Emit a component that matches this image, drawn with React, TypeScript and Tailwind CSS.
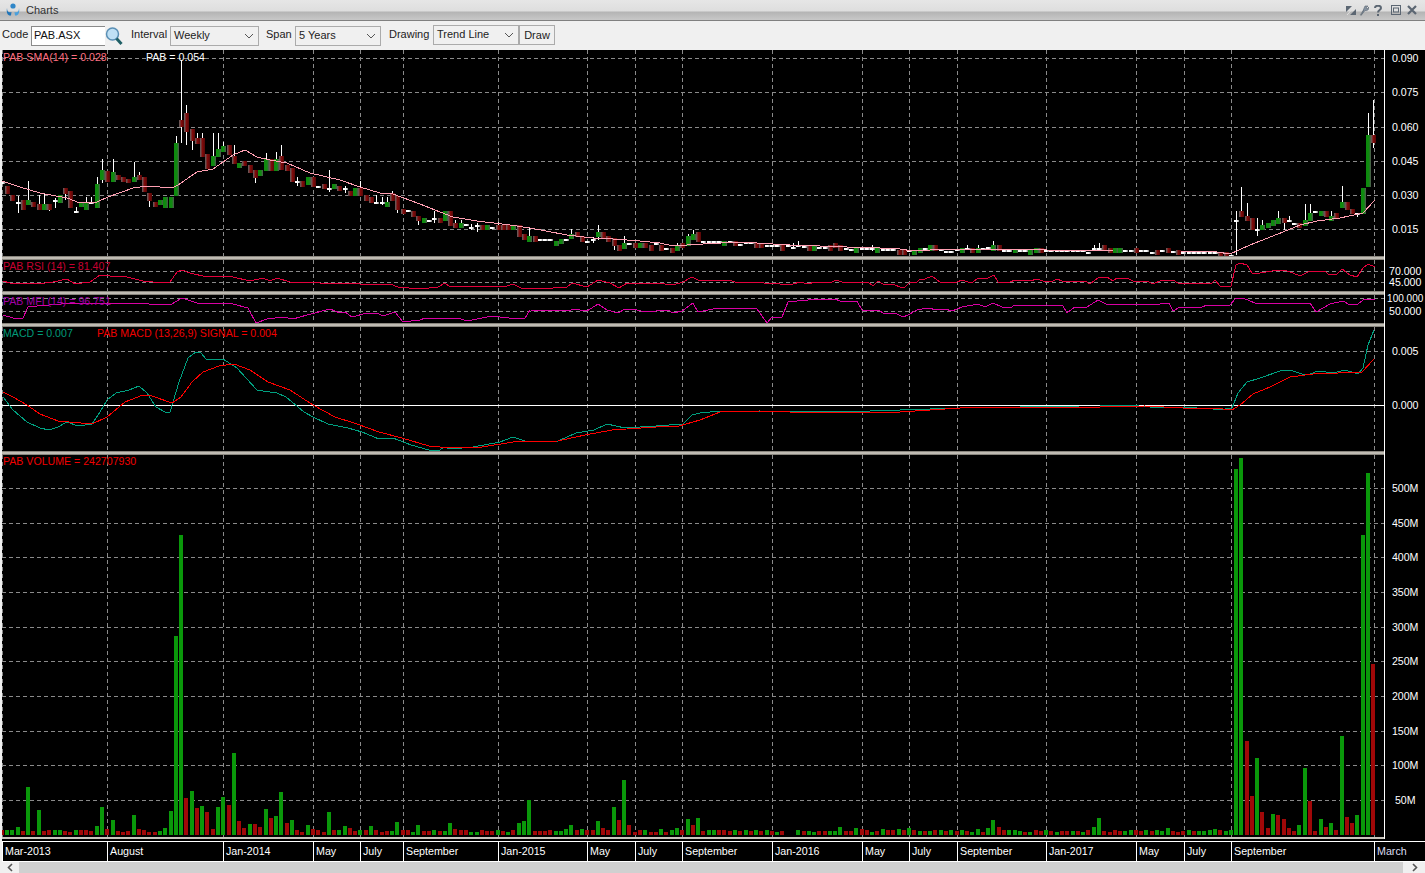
import React from "react";

const VOL = [-5,5,5,8,-4,48,-4,25,-4,-5,5,5,-4,-3,5,-5,-5,-4,9,28,-6,15,-4,-3,-4,20,-6,-5,-3,-3,4,7,24,199,300,-37,44,-27,29,-23,-6,28,38,-30,82,-14,-7,11,-11,-8,26,-17,19,43,-12,15,-5,-3,10,-6,-5,-3,23,-5,5,9,-7,-4,5,-5,9,-5,-3,-4,4,13,-5,-5,3,10,
-4,-4,5,-4,4,12,-6,-5,-5,3,3,-5,-4,-4,5,-4,3,-5,12,14,35,-4,-4,-4,-5,4,4,6,10,-5,6,-5,-5,14,-7,-5,28,-15,55,-10,-3,-5,5,-3,-3,6,-3,5,7,-5,16,-10,17,-4,5,5,-5,-5,-4,5,-4,5,-4,5,-4,5,-4,3,-4,0,0,5,-4,4,3,-4,-4,4,4,
8,-4,-4,7,-6,-5,3,-4,6,-5,-5,6,-5,7,-5,4,-4,4,-5,5,-4,5,-4,5,-4,3,6,-3,7,15,-8,-5,5,5,4,-3,3,-5,-4,5,-4,3,-4,-4,4,-4,3,-5,8,17,-4,-3,-5,-4,4,5,-5,-4,5,-4,5,4,7,-4,-3,-4,5,-4,4,4,5,6,-5,4,5,
366,377,-94,-39,77,-23,-7,21,-20,-16,-7,-4,10,67,-34,-4,16,-8,12,-5,99,-18,-12,20,300,362,-171];

const CANDLES = "d182 r186,194 r195,201 d202,196,213 r200,210 g200,205,181 r202,207 r204,210,195 g204,210,194 r204,210,,211 d200,198,208 g195,203 r188,194,,200 r191,208 d211,207,213 g202,207 g203,210,197 d202,197 g184,208,177 g170,180,159,183 r171,182 g172,182,159 r175,180 r177,182 r179,183 g177,182,162 r175,180,172 r177,192 r193,201,,207 r202,207 g200,205 g197,208 g197,208 g143,196,136 r120,127,60,143 r113,132,105,145 r129,141,,150 r138,144,133 r138,157,133 r154,169 g156,166,133 g149,157,133 g146,152,142 r145,155 r156,164,145 g163,168 r161,166 r165,173 r170,178,,183 g170,176 g159,171,153 r159,171 g159,171,152 r156,170,145 r165,171 r168,182 d181,177,186 r181,187 g177,185 r177,187 d186 r184,189 d188,170,192 g184,189 r186,191 d188,186,193 r191,196 g188,196 r188,196,181 r195,201 r197,203 d202,195 d202,197,205 g202,207,197 r193,201,191 r196,210,,213 r209,214 d210 r211,217 r216,221,,225 g218,223 d220 d218,211,223 r218,223 g211,221 r211,226 r223,228,220 g223,228,220 d224 d227,224,230 d225,223,232 r225,230 g225,230 d227 r225,230,222 r225,230 r225,230 g225,230 r225,237 r234,240 g236,242,227 r236,242 d239 d239 d239 g241,246 g239,244 d239 g234,239,229 r232,237 r236,242 d241 d239,237,243 g232,237,225,240 r232,238 r236,242 r238,246,,250 r245,251 g243,249,236 d243 r243,248 g243,248 r243,248 r245,251 d243 r245,251 d248 r248,253 g245,251,243 r243,248 g236,246,234 g234,240,230 r232,242 d241 d241 d241 d241 g241,246 d241 r241,246 d244 d242 d242 r243,248 r243,248 d245 d245 d245 r245,251 d245 d247,243 d245,241 d246 r245,251 g245,251 d247 d247 r245,251 r243,248 r245,251 d248 d249 g248,253 d248 d248 d248,245,251 g248,253 d249 d249 d249 r250,255 r250,255 d250 g250,255 g248,253 d248 g245,251 r245,251 d249 d251 d251 d249 g248,253 d248,245 r248,253 g248,253,245 d248 d247 g245,251,241 r245,251 d250 d250 g249,253 d250 d250 g250,255 g248,253 r248,253 d250 d250 d250 d250 d250 d250 d250 d250 d252 d248,245 d248,243 r245,251 r248,253 g248,253 g248,253 d250 d250 r248,253 d250 d250 d252 r250,255 d250 r248,253 d251 r250,255 d252 d252 d252 d252 d252 d252 d252 r252,258 r252,258 d255 d220,211,255 r211,217,187 r216,221,203 r218,230 d229,218,236 g225,230,220 g223,228 g220,226 g218,224,211 r218,223,,230 d220,216 d223 r223,228 g220,226,204 g213,221,204 d211 g211,216 r211,217 g216,221,211 r213,219 g202,208,186 r202,210 r209,214 d213,,217 g188,214 g135,187,113 r135,143,100,148".split(" ");

const SMA = [2,181,20,187,40,193,67,198,80,203,97,202,108,197,133,188,147,186,172,188,178,185,197,172,213,169,233,155,245,150,257,157,270,160,287,163,310,173,340,180,360,187,380,193,393,194,420,204,440,212,453,217,477,221,510,225,530,228,567,235,593,238,613,239,640,241,660,243,673,246,687,245,703,244,740,242,773,244,790,245,820,246,847,247,880,248,900,249,913,251,947,249,993,249,1047,250,1113,251,1180,251,1217,252,1230,254,1250,245,1283,232,1300,225,1317,221,1340,218,1363,213,1375,200];

const RSI = [3,281,10,283,20,283,37,284,53,282,67,279,75,284,90,282,100,275,110,276,127,277,143,281,163,283,170,282,177,272,182,270,190,273,207,277,220,276,233,277,250,281,263,278,270,281,277,278,290,282,310,282,320,283,340,283,357,283,363,285,390,284,398,287,420,289,438,287,445,283,450,287,467,286,507,286,513,284,523,289,553,288,567,287,572,283,587,287,598,280,610,283,619,288,627,283,650,284,657,283,673,285,683,282,692,277,698,280,730,280,737,283,747,282,780,284,793,284,800,282,808,284,815,282,830,283,836,280,842,282,868,282,873,286,878,281,883,284,895,285,900,287,905,287,910,282,917,282,920,279,925,279,932,276,940,282,957,282,962,280,968,282,973,282,978,278,988,278,994,275,998,282,1010,282,1015,280,1030,281,1037,279,1043,281,1053,281,1057,279,1062,281,1085,281,1090,284,1098,278,1107,277,1113,281,1117,278,1127,278,1133,281,1147,281,1153,284,1162,280,1173,280,1178,283,1212,283,1215,280,1220,286,1231,286,1236,265,1240,263,1247,265,1252,273,1260,273,1272,271,1282,270,1287,271,1293,273,1300,276,1310,271,1325,271,1328,274,1337,274,1342,269,1350,275,1357,277,1363,268,1368,264,1375,267];

const MFI = [3,315,13,318,23,318,28,307,37,306,73,303,93,303,127,303,170,305,182,298,197,303,233,304,248,308,256,323,267,319,283,317,293,319,307,315,330,309,340,313,345,312,352,317,367,313,377,313,383,316,395,312,403,322,420,320,425,318,447,319,458,318,467,321,492,316,517,319,525,318,530,310,570,311,572,309,587,311,598,304,607,310,618,313,625,309,637,310,645,312,668,310,673,313,682,311,693,303,698,312,718,308,732,308,757,309,767,323,772,317,782,317,788,302,797,301,808,300,822,299,835,299,840,301,857,301,862,310,880,311,883,313,895,313,903,317,908,315,917,310,928,308,937,310,945,309,952,311,962,307,978,304,985,307,993,303,1002,307,1012,307,1013,306,1047,305,1063,306,1067,313,1075,307,1087,307,1098,300,1108,305,1133,304,1160,304,1169,303,1173,311,1180,307,1202,307,1207,305,1230,305,1236,298,1243,298,1255,303,1310,303,1316,312,1330,304,1343,301,1350,305,1358,304,1363,300,1375,299];

const MACD_G = [3,397,13,410,27,422,40,428,49,430,58,427,67,422,78,426,92,424,100,412,107,400,116,393,129,390,139,386,147,393,156,407,165,412,170,412,179,382,188,358,196,352,201,353,206,359,223,359,237,368,257,390,263,391,277,393,286,397,304,412,313,417,328,424,348,428,362,432,379,439,393,438,411,445,429,450,440,450,444,447,451,449,473,447,500,442,513,437,525,441,558,441,576,433,594,430,607,424,625,428,656,426,683,424,692,415,700,413,720,411,770,411,870,411,960,408,1080,406,1100,406,1127,405,1150,407,1172,407,1197,408,1213,409,1225,409,1232,408,1238,393,1247,382,1260,378,1283,370,1290,370,1302,374,1310,374,1318,371,1333,373,1345,370,1358,374,1363,368,1368,345,1374,330];

const MACD_R = [3,392,13,397,27,405,40,414,58,421,92,424,107,417,125,402,143,395,152,396,172,403,181,397,192,382,203,372,219,366,234,364,250,370,268,382,290,390,313,405,335,417,357,424,379,432,402,438,429,446,451,448,482,447,513,442,558,441,585,435,612,430,656,427,679,426,700,420,720,412,760,411,790,412,900,412,960,408,1100,407,1145,406,1183,408,1197,408,1223,409,1232,410,1240,405,1253,394,1270,387,1290,377,1313,374,1338,373,1362,372,1374,359];

const GRID_X = [2,107,223,313,360,403,498,587,635,682,772,862,909,957,1046,1136,1184,1231,1374];
const pts = (a: number[]) => a.reduce((s, v, i) => s + (i % 2 ? "," : " ") + v, "").trim();
const bx = (i: number) => Math.round(1.75 + 5.275 * i);

function Chart({ top, h, grid, children }: { top: number; h: number; grid: number[]; children?: React.ReactNode }) {
  return (
    <svg width={1382} height={h} viewBox={`2 ${top} 1382 ${h}`} className="block shrink-0">
      <g stroke="#8a8a8a" strokeWidth={1} strokeDasharray="4 3" shapeRendering="crispEdges">
        {GRID_X.map((x) => <line key={x} x1={x + 0.5} x2={x + 0.5} y1={top} y2={top + h} />)}
        {grid.map((y) => <line key={y} x1={2} x2={1384} y1={y + 0.5} y2={y + 0.5} />)}
      </g>
      {children}
    </svg>
  );
}

function Panel({ top, h, grid, labels, legend, children }: { top: number; h: number; grid: number[]; labels: [string, number][]; legend?: React.ReactNode; children?: React.ReactNode }) {
  return (
    <div className="flex shrink-0" style={{ height: h }}>
      <div className="relative w-[1382px] shrink-0 overflow-hidden">
        <Chart top={top} h={h} grid={grid}>{children}</Chart>
        {legend}
      </div>
      <div className="flex-1 border-l border-white">
        <svg width={40} height={h} viewBox={`1385 ${top} 40 ${h}`} className="relative z-10 block overflow-visible">
          {labels.map(([t, y]) => (
            <text key={t} x={1405.2} y={y + 4} textAnchor="middle" fontSize={t.length > 6 ? 10 : 10.6} fill="#ffffff">{t}</text>
          ))}
        </svg>
      </div>
    </div>
  );
}

function Sep() {
  return (
    <div className="flex h-[4px] shrink-0">
      <div className="w-[1382px] shrink-0 bg-gradient-to-b from-[#6f6c64] via-[#dcd8d0] to-[#6f6c64]" />
      <div className="flex-1 border-l border-white" />
    </div>
  );
}

function Candles() {
  return (
    <g shapeRendering="crispEdges">
      {CANDLES.map((c, i) => {
        const t = c[0];
        const [a, b, hi, lo] = c.slice(1).split(",").map((v) => (v === "" ? NaN : Number(v)));
        const x = bx(i);
        if (t === "d") {
          return (
            <g key={i}>
              {(b > 0 || hi > 0) && <rect x={x} y={b || a} width={1} height={Math.max((hi || a + 1) - (b || a), 1)} fill="#fff" />}
              <rect x={x - 2} y={a} width={5} height={2} fill="url(#dj)" />
            </g>
          );
        }
        return (
          <g key={i}>
            {hi > 0 && <rect x={x} y={hi} width={1} height={a - hi} fill="#fff" />}
            {lo > 0 && <rect x={x} y={b} width={1} height={lo - b} fill="#fff" />}
            <rect x={x - 2} y={a} width={5} height={b - a} fill={t === "g" ? "url(#up)" : "url(#dn)"} />
          </g>
        );
      })}
    </g>
  );
}

function Chevron() {
  return (
    <svg width="10" height="6" viewBox="0 0 10 6" className="shrink-0">
      <path d="M1 1 L5 5 L9 1" fill="none" stroke="#555" strokeWidth="1" />
    </svg>
  );
}

function Select({ label, w, cls }: { label: string; w: string; cls?: string }) {
  return (
    <div className={`flex h-[20px] items-center justify-between border border-[#ababab] bg-[#f0f0f0] pl-[3px] pr-[4px] text-[#222] ${w} ${cls ?? ""}`}>
      <span>{label}</span>
      <Chevron />
    </div>
  );
}

const DATES: [string, number][] = [["Mar-2013",105],["August",116],["Jan-2014",90],["May",47],["July",43],["September",95],["Jan-2015",89],["May",48],["July",47],["September",90],["Jan-2016",90],["May",47],["July",48],["September",89],["Jan-2017",90],["May",48],["July",47],["September",143]];

export default function App() {
  return (
    <div className="flex h-[873px] w-[1425px] flex-col overflow-hidden bg-[#f0f0f0] [font-family:'Liberation_Sans',Arial,sans-serif]">
      {/* Title bar */}
      <div className="flex h-[21px] shrink-0 items-center justify-between border-b border-[#808080] bg-[linear-gradient(#e6e6e6_0%,#dedede_55%,#b4b4b4_60%,#c8c8c8_100%)] pl-[6px] pr-[8px]">
        <div className="flex items-center gap-[6px]">
          <svg width="14" height="14" viewBox="0 0 14 14">
            <circle cx="7" cy="3" r="2.6" fill="#2f86c8" />
            <path d="M1 5 C1 9 3 10 5.5 9 L5 12.5 C2 13 0 10 1 5 Z" fill="#1f74b8" />
            <path d="M13 5 C13 9 11 10 8.5 9 L9 12.5 C12 13 14 10 13 5 Z" fill="#4aa0dc" />
          </svg>
          <span className="mt-[1px] text-[11px] text-[#333]">Charts</span>
        </div>
        <div className="flex items-center gap-[5px]">
          <svg width="10" height="11" viewBox="0 0 10 11" className="-mr-[2px]">
            <path d="M0 1 H6 L0 7 Z M10 10 H4 L10 4 Z" fill="#5b6672" />
            <path d="M1 10 L9 1" stroke="#e0e0e0" strokeWidth="1" />
          </svg>
          <svg width="10" height="11" viewBox="0 0 10 11">
            <path d="M1 10 L5 5 M6 1 L9 1 L7 3 L8 4 L10 2 C10 5 8 6 6 5.5 L2 10.5 Z" fill="#8592a0" stroke="#5b6672" strokeWidth="0.6" />
          </svg>
          <svg width="8" height="11" viewBox="1 0 8 11">
            <path d="M2 3 C2 0 8 0 8 3 C8 5 5 5 5 7.5" fill="none" stroke="#5b6672" strokeWidth="2" />
            <rect x="4" y="9" width="2" height="2" fill="#5b6672" />
          </svg>
          <svg width="10" height="10" viewBox="0 0 10 10" className="ml-[4px]">
            <rect x="0.5" y="0.5" width="9" height="9" fill="none" stroke="#5b6672" />
            <rect x="2.5" y="3" width="5" height="4" fill="none" stroke="#5b6672" />
          </svg>
          <svg width="10" height="10" viewBox="0 0 10 10" className="ml-[1px]">
            <path d="M1 1 L9 9 M9 1 L1 9" stroke="#5b6672" strokeWidth="2.2" />
          </svg>
        </div>
      </div>

      {/* Toolbar */}
      <div className="flex h-[29px] shrink-0 items-center bg-[#f0f0f0] pl-[2px] text-[11px] text-[#222]">
        <span className="mb-[2px] w-[29px]">Code</span>
        <div className="flex h-[20px] w-[74px] items-center border border-[#8a8a8a] border-r-0 bg-white pl-[2px] text-[#111]">PAB.ASX</div>
        <svg width="18" height="20" viewBox="0 0 18 20">
          <circle cx="7.5" cy="8" r="6" fill="#bfe0f5" stroke="#5a8fb5" strokeWidth="1.5" />
          <path d="M11.5 12.5 L16.5 18" stroke="#1f5f66" strokeWidth="3" />
        </svg>
        <span className="mb-[2px] ml-[8px] w-[39px]">Interval</span>
        <Select label="Weekly" w="w-[89px]" />
        <span className="mb-[2px] ml-[7px] w-[29px]">Span</span>
        <Select label="5 Years" w="w-[86px]" />
        <span className="mb-[2px] ml-[8px] w-[44px]">Drawing</span>
        <Select label="Trend Line" w="w-[86px]" cls="mb-[2px]" />
        <div className="mb-[1px] flex h-[20px] w-[36px] items-center justify-center border border-[#ababab] bg-[#f0f0f0]">Draw</div>
      </div>

      {/* Chart area */}
      <div className="ml-[2px] flex flex-1 flex-col bg-black">
        <Panel
          top={50}
          h={206}
          grid={[58, 92, 127, 161, 195, 229]}
          labels={[["0.090",58],["0.075",92],["0.060",127],["0.045",161],["0.030",195],["0.015",229]]}
          legend={
            <>
              <span className="absolute left-[1px] top-[1px] text-[10.6px] leading-[12px] text-[#ff6f80]">PAB SMA(14) = 0.028</span>
              <span className="absolute left-[144px] top-[1px] text-[10.6px] leading-[12px] text-white">PAB = 0.054</span>
            </>
          }
        >
          <defs>
            <linearGradient id="up"><stop offset="0" stopColor="#0c8a0c" /><stop offset="0.6" stopColor="#118a11" /><stop offset="1" stopColor="#555" /></linearGradient>
            <linearGradient id="dn"><stop offset="0" stopColor="#666" /><stop offset="0.5" stopColor="#800a0a" /><stop offset="1" stopColor="#540808" /></linearGradient>
            <linearGradient id="dj"><stop offset="0" stopColor="#fff" /><stop offset="0.6" stopColor="#fff" /><stop offset="1" stopColor="#777" /></linearGradient>
          </defs>
          <Candles />
          <polyline points={pts(SMA)} fill="none" stroke="#ff9fb2" strokeWidth={1} shapeRendering="crispEdges" />
        </Panel>
        <Sep />
        <Panel
          top={260}
          h={31}
          grid={[271, 282]}
          labels={[["70.000",271],["45.000",282]]}
          legend={<span className="absolute left-[1px] top-[0px] text-[10.6px] leading-[12px] text-[#c80032]">PAB RSI (14) = 81.407</span>}
        >
          <polyline points={pts(RSI)} fill="none" stroke="#e4003c" strokeWidth={1} shapeRendering="crispEdges" />
        </Panel>
        <Sep />
        <Panel
          top={295}
          h={28}
          grid={[298, 311]}
          labels={[["100.000",298],["50.000",311]]}
          legend={<span className="absolute left-[1px] top-[0px] text-[10.6px] leading-[12px] text-[#a000a8]">PAB MFI (14) = 96.751</span>}
        >
          <polyline points={pts(MFI)} fill="none" stroke="#d800a4" strokeWidth={1} shapeRendering="crispEdges" />
        </Panel>
        <Sep />
        <Panel
          top={327}
          h={124}
          grid={[351]}
          labels={[["0.005",351],["0.000",405]]}
          legend={
            <>
              <span className="absolute left-[1px] top-[0px] text-[10.6px] leading-[12px] text-[#009a78]">MACD = 0.007</span>
              <span className="absolute left-[95px] top-[0px] text-[10.6px] leading-[12px] text-[#f00000]">PAB MACD (13,26,9) SIGNAL = 0.004</span>
            </>
          }
        >
          <rect x={2} y={405} width={1382} height={1} fill="#fff" shapeRendering="crispEdges" />
          <polyline points={pts(MACD_G)} fill="none" stroke="#00a080" strokeWidth={1} shapeRendering="crispEdges" />
          <polyline points={pts(MACD_R)} fill="none" stroke="#ff0000" strokeWidth={1} shapeRendering="crispEdges" />
        </Panel>
        <Sep />
        <Panel
          top={455}
          h={382}
          grid={[488, 523, 557, 592, 627, 661, 696, 731, 765, 800]}
          labels={[["500M",488],["450M",523],["400M",557],["350M",592],["300M",627],["250M",661],["200M",696],["150M",731],["100M",765],["50M",800]]}
          legend={<span className="absolute left-[1px] top-[0px] text-[10.6px] leading-[12px] text-[#f00000]">PAB VOLUME = 242707930</span>}
        >
          <g shapeRendering="crispEdges">
            {VOL.map((v, i) => (
              <rect key={i} x={bx(i) - 2} y={835 - Math.abs(v)} width={4} height={Math.abs(v)} fill={v > 0 ? "#0a980a" : "#a00808"} />
            ))}
          </g>
        </Panel>
        <div className="flex h-[2px] shrink-0">
          <div className="w-[1382px] shrink-0 bg-[#c8c4bc]" />
          <div className="flex-1 border-l border-white" />
        </div>
        <div className="h-[2px] shrink-0 bg-black" />

        {/* Date axis */}
        <div className="flex h-[21px] shrink-0 border-y border-white bg-black text-[10.7px] leading-[19px] text-white">
          {DATES.map(([d, w], i) => (
            <div key={i} className="shrink-0 border-l border-white pl-[2px]" style={{ width: w }}>{d}</div>
          ))}
          <div className="flex-1 border-l border-white pl-[2px] text-[#dcdcf0]">March</div>
        </div>
      </div>

      {/* Scrollbar */}
      <div className="flex h-[11px] shrink-0 items-center bg-[#f0f0f0]">
        <div className="flex w-[19px] items-center pl-[7px]">
          <svg width="6" height="9" viewBox="0 0 6 9"><path d="M5 1 L1.5 4.5 L5 8" fill="none" stroke="#555" strokeWidth="1.6" /></svg>
        </div>
        <div className="h-full w-[1384px] bg-[#d0d0d0]" />
        <div className="flex flex-1 items-center justify-end pr-[7px]">
          <svg width="6" height="9" viewBox="0 0 6 9"><path d="M1 1 L4.5 4.5 L1 8" fill="none" stroke="#555" strokeWidth="1.6" /></svg>
        </div>
      </div>
    </div>
  );
}
